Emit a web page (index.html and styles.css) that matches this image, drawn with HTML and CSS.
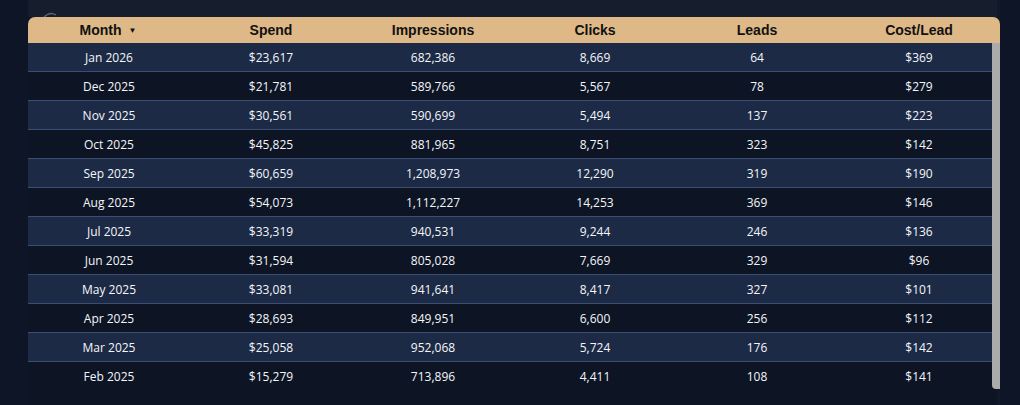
FILE: index.html
```html
<!DOCTYPE html>
<html>
<head>
<meta charset="utf-8">
<link rel="stylesheet" href="styles.css">
</head>
<body>
<div class="panel">
  <svg class="ghost" width="16" height="8" viewBox="0 0 16 8"><path d="M2 7 Q8 1 14 5" fill="none" stroke="#5a6170" stroke-width="1.5"/></svg>
  <div class="table">
    <div class="head">
      <div class="hcell">Month <span class="sort">▼</span></div>
      <div class="hcell">Spend</div>
      <div class="hcell">Impressions</div>
      <div class="hcell">Clicks</div>
      <div class="hcell">Leads</div>
      <div class="hcell">Cost/Lead</div>
    </div>
    <div class="rows">
      <div class="row odd"><div>Jan 2026</div><div>$23,617</div><div>682,386</div><div>8,669</div><div>64</div><div>$369</div></div>
      <div class="row"><div>Dec 2025</div><div>$21,781</div><div>589,766</div><div>5,567</div><div>78</div><div>$279</div></div>
      <div class="row odd"><div>Nov 2025</div><div>$30,561</div><div>590,699</div><div>5,494</div><div>137</div><div>$223</div></div>
      <div class="row"><div>Oct 2025</div><div>$45,825</div><div>881,965</div><div>8,751</div><div>323</div><div>$142</div></div>
      <div class="row odd"><div>Sep 2025</div><div>$60,659</div><div>1,208,973</div><div>12,290</div><div>319</div><div>$190</div></div>
      <div class="row"><div>Aug 2025</div><div>$54,073</div><div>1,112,227</div><div>14,253</div><div>369</div><div>$146</div></div>
      <div class="row odd"><div>Jul 2025</div><div>$33,319</div><div>940,531</div><div>9,244</div><div>246</div><div>$136</div></div>
      <div class="row"><div>Jun 2025</div><div>$31,594</div><div>805,028</div><div>7,669</div><div>329</div><div>$96</div></div>
      <div class="row odd"><div>May 2025</div><div>$33,081</div><div>941,641</div><div>8,417</div><div>327</div><div>$101</div></div>
      <div class="row"><div>Apr 2025</div><div>$28,693</div><div>849,951</div><div>6,600</div><div>256</div><div>$112</div></div>
      <div class="row odd"><div>Mar 2025</div><div>$25,058</div><div>952,068</div><div>5,724</div><div>176</div><div>$142</div></div>
      <div class="row last"><div>Feb 2025</div><div>$15,279</div><div>713,896</div><div>4,411</div><div>108</div><div>$141</div></div>
      <div class="scrollbar"></div>
    </div>
  </div>
</div>
</body>
</html>
```
FILE: styles.css
```css
html, body {
  margin: 0;
  padding: 0;
  background: #0d1526;
  height: 405px;
  overflow: hidden;
}
.panel {
  position: relative;
  margin-left: 28px;
  width: 972px;
  height: 405px;
  box-sizing: border-box;
  padding-top: 17px;
  background: linear-gradient(#161d2d 0, #161d2d 17px, #0d1424 17px);
  border-right: 3px solid #111827;
}
.ghost {
  position: absolute;
  left: 14px;
  top: 10px;
}
.table {
  position: relative;
  width: 972px;
}
.head {
  display: grid;
  grid-template-columns: repeat(6, 162px);
  height: 26px;
  align-items: center;
  background: #deb887;
  border-radius: 7px 7px 0 0;
  font-family: "Liberation Sans", Arial, sans-serif;
  font-weight: bold;
  font-size: 14px;
  color: #111;
}
.hcell {
  text-align: center;
}
.hcell:first-child {
  padding-right: 2px;
}
.sort {
  font-size: 8px;
  vertical-align: 2px;
  margin-left: 3px;
}
.rows {
  position: relative;
}
.row {
  display: grid;
  grid-template-columns: repeat(6, 162px);
  height: 28px;
  align-items: center;
  border-bottom: 1px solid #3a4d73;
  background: #0d1424;
  font-family: "Open Sans", "Noto Sans", sans-serif;
  font-size: 12px;
  font-weight: 500;
  color: #f4f6fa;
}
.row.odd {
  background: #1c2a45;
}
.row.last {
  border-bottom-color: #0d1424;
}
.row > div {
  text-align: center;
}
.scrollbar {
  position: absolute;
  right: 0;
  top: 0;
  width: 8px;
  height: 346px;
  background: #ababab;
  border-bottom-left-radius: 4px;
}
```
